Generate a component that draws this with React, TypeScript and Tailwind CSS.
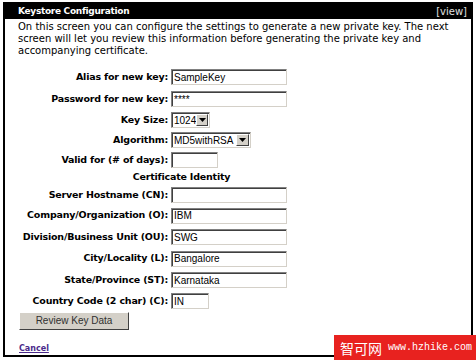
import React from 'react';

const labelFont = { fontFamily: '"DejaVu Sans", Verdana, sans-serif' };

interface RowProps {
    label: string;
    h: string;
    children: React.ReactNode;
}

const Row: React.FC<RowProps> = ({ label, h, children }) => (
    <div className={`flex items-center ${h}`}>
        <div className="w-[166px] text-right pr-[3px] text-[9.5px] font-bold tracking-[-0.2px] text-black whitespace-nowrap">
            {label}
        </div>
        {children}
    </div>
);

const TextBox: React.FC<{ value?: string; w?: string }> = ({ value = '', w = 'w-[116px]' }) => (
    <div
        className={`${w} h-[16px] bg-white border border-t-[#808080] border-l-[#808080] border-r-[#d4d0c8] border-b-[#d4d0c8] shadow-[inset_1px_1px_0_#404040] flex items-center pl-[2px] text-[10px] text-black`}
        style={{ fontFamily: '"Liberation Sans", Arial, sans-serif' }}
    >
        {value}
    </div>
);

const SelectBox: React.FC<{ value: string; w: string }> = ({ value, w }) => (
    <div
        className={`${w} h-[16px] bg-white border border-t-[#808080] border-l-[#808080] border-r-[#d4d0c8] border-b-[#d4d0c8] shadow-[inset_1px_1px_0_#404040] flex items-center text-[10px] text-black`}
        style={{ fontFamily: '"Liberation Sans", Arial, sans-serif' }}
    >
        <span className="flex-1 pl-[2px]">{value}</span>
        <span className="w-[13px] h-[12px] mr-[1px] bg-[#d4d0c8] border border-t-white border-l-white border-r-[#404040] border-b-[#404040] flex items-center justify-center">
            <svg width="7" height="4" viewBox="0 0 7 4">
                <path d="M0 0h7L3.5 4z" fill="#000" />
            </svg>
        </span>
    </div>
);

export default function App() {
    return (
        <div className="w-[476px] h-[360px] bg-white relative overflow-hidden" style={labelFont}>
            <div className="ml-[3px] mt-[2px] w-[470px] h-[355px] border-2 border-black flex flex-col overflow-hidden">
                <div className="h-[15px] shrink-0 bg-black flex items-center justify-between pl-[13px] pr-[4px]">
                    <span className="text-white text-[9px] font-bold tracking-[-0.3px]">Keystore Configuration</span>
                    <span className="text-[#e0e0e0] text-[10px]">[view]</span>
                </div>
                <p className="pl-[13px] pr-[20px] pt-[2px] text-[10px] leading-[12px] text-black">
                    On this screen you can configure the settings to generate a new private key. The next screen will
                    let you review this information before generating the private key and accompanying certificate.
                </p>
                <div className="mt-[9px] flex flex-col">
                    <Row label="Alias for new key:" h="h-[22px]">
                        <TextBox value="SampleKey" />
                    </Row>
                    <Row label="Password for new key:" h="h-[22px]">
                        <TextBox value="****" />
                    </Row>
                    <Row label="Key Size:" h="h-[20px]">
                        <SelectBox value="1024" w="w-[39px]" />
                    </Row>
                    <Row label="Algorithm:" h="h-[20px]">
                        <SelectBox value="MD5withRSA" w="w-[80px]" />
                    </Row>
                    <Row label="Valid for (# of days):" h="h-[20px]">
                        <TextBox w="w-[47px]" />
                    </Row>
                    <div className="h-[15px] flex items-center">
                        <div className="w-[353px] text-center text-[9.5px] font-bold tracking-[-0.2px]">Certificate Identity</div>
                    </div>
                    <Row label="Server Hostname (CN):" h="h-[20px]">
                        <TextBox />
                    </Row>
                    <Row label="Company/Organization (O):" h="h-[21px]">
                        <TextBox value="IBM" />
                    </Row>
                    <Row label="Division/Business Unit (OU):" h="h-[22px]">
                        <TextBox value="SWG" />
                    </Row>
                    <Row label="City/Locality (L):" h="h-[21px]">
                        <TextBox value="Bangalore" />
                    </Row>
                    <Row label="State/Province (ST):" h="h-[22px]">
                        <TextBox value="Karnataka" />
                    </Row>
                    <Row label="Country Code (2 char) (C):" h="h-[20px]">
                        <TextBox value="IN" w="w-[38px]" />
                    </Row>
                </div>
                <div className="flex pl-[14px] pt-[1px]">
                    <button
                        className="w-[110px] h-[18px] bg-[#d4d0c8] border border-t-white border-l-white border-r-[#404040] border-b-[#404040] text-[10px] leading-none text-[#303030]"
                        style={{ fontFamily: '"Liberation Sans", Arial, sans-serif' }}
                    >
                        Review Key Data
                    </button>
                </div>
                <div className="flex pl-[14px] mt-[13px] h-[12px] items-center">
                    <a href="#" className="text-[8px] leading-none font-bold text-[#4b2a8a] underline">
                        Cancel
                    </a>
                </div>
            </div>
            <div className="absolute left-[334px] top-[335px] w-[142px] h-[25px] bg-[#e8221f] flex items-center pl-[6px] gap-[6px] text-white whitespace-nowrap">
                <span className="shrink-0 text-[14px] leading-none" style={{ fontFamily: '"Noto Sans CJK SC", sans-serif' }}>
                    智可网
                </span>
                <span className="shrink-0 text-[10px]" style={{ fontFamily: '"Liberation Mono", monospace' }}>
                    www.hzhike.com
                </span>
            </div>
        </div>
    );
}
